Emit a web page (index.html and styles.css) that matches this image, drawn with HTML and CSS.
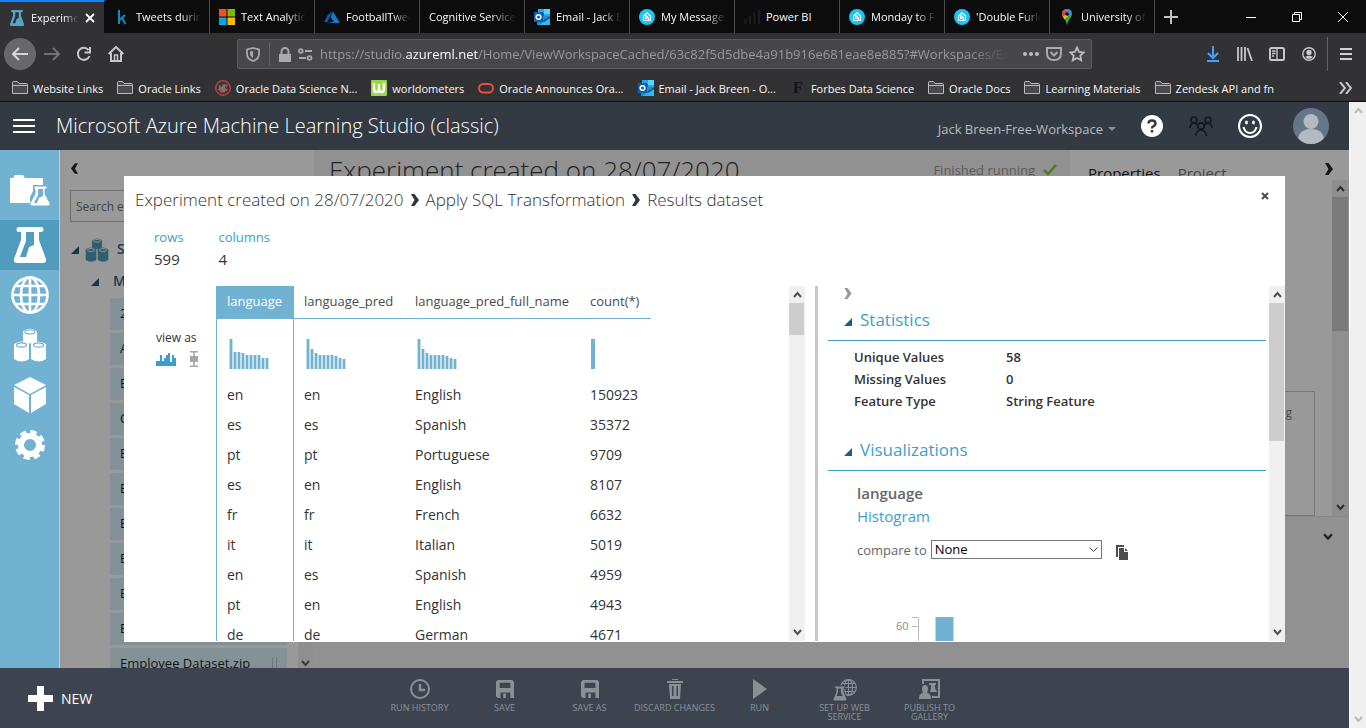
FILE: index.html
```html
<!DOCTYPE html>
<html lang="en">
<head>
<meta charset="utf-8">
<title>Experiments - Microsoft Azure Machine Learning Studio (classic)</title>
<link rel="stylesheet" href="styles.css">
</head>
<body>
<svg class="defs" aria-hidden="true">
  <symbol id="folder" viewBox="0 0 16 16"><path d="M.5 13.500V2.500q0-1 1-1h4l1.500 2h7.500q1 0 1 1v9z" fill="#4a4a4c" stroke="#b9b9ba"/><path d="M.5 5.500h15" stroke="#b9b9ba"/></symbol>
  <symbol id="outlook" viewBox="0 0 16 16"><path d="M4 0h12v8H4z" fill="#28a8ea"/><path d="M10 0h6v5h-6z" fill="#50d9ff"/><path d="M4 4h6v4H4z" fill="#0364b8"/><path d="M3 7l13 0v9H3z" fill="#1490df"/><path d="M16 7.500l-7 4.500 7 4z" fill="#123b6d"/><path d="M16 9L5 16h11z" fill="#35b8f1"/><path d="M0 3h9v10H0z" fill="#0f5fb5"/><circle cx="4.500" cy="8" r="2.300" fill="none" stroke="#fff" stroke-width="1.500"/></symbol>
  <symbol id="zen" viewBox="0 0 16 16"><circle cx="8" cy="8" r="8" fill="#19c5f5"/><path d="M4.500 11.500V7L8 3.800 11.500 7v4.500zM6.500 6l3 3v2M6.500 7.500v2h2" fill="none" stroke="#fff" stroke-width="1.200"/></symbol>
  <symbol id="flask" viewBox="0 0 32 36"><path fill-rule="evenodd" d="M5 0h22a2 2 0 0 1 0 5h-2v8l7 19q1 4-3 4H3q-4 0-3-4L7 13V5H5a2 2 0 0 1 0-5zM12 5v9L6 30h6l3-10 5-2V5z"/></symbol>
  <symbol id="globe" viewBox="0 0 38 38"><g fill="none" stroke="currentColor" stroke-width="2.600"><circle cx="19" cy="19" r="17.500"/><ellipse cx="19" cy="19" rx="9" ry="17.500"/><path d="M19 1v36M1 19h36M4 10h30M4 28h30"/></g></symbol>
  <symbol id="cylinders" viewBox="0 0 32 34"><g><path d="M9 3.500Q16-2 23 3.500V14q-7 3-14 0zM0 16q7-5 15 0v15q-7 5-15 0zM17 16q7-5 15 0v15q-7 5-15 0z"/><g fill="none" stroke="var(--ring)" stroke-width="1.200"><ellipse cx="16" cy="4" rx="5" ry="2"/><ellipse cx="7.500" cy="17" rx="5" ry="2.200"/><ellipse cx="24.500" cy="17" rx="5" ry="2.200"/></g></g></symbol>
  <symbol id="up" viewBox="0 0 9 7"><path d="M1 6l3.500-4L8 6" fill="none" stroke="currentColor" stroke-width="2"/></symbol>
  <symbol id="down" viewBox="0 0 9 7"><path d="M1 1l3.500 4L8 1" fill="none" stroke="currentColor" stroke-width="2"/></symbol>
  <symbol id="chev" viewBox="0 0 8 12"><path d="M0 0h3.500L8 6l-4.500 6H0l3.500-6z"/></symbol>
  <symbol id="tri" viewBox="0 0 8 8"><path d="M8 0v8H0z"/></symbol>
  <symbol id="floppy" viewBox="0 0 20 20"><path fill-rule="evenodd" d="M2 0h16l2 2v18h-4v-6H5v6H2l-2-2V2zM4 3v6h12V3zM8 15h3v5H8z"/></symbol>
</svg>

<header class="browser">
  <div class="tabs">
    <div class="tab active"><svg width="16" height="16" viewBox="0 0 32 36" fill="#55a5c8"><use href="#flask" width="32" height="36"/></svg><span class="label">Experiments</span><button class="close" aria-label="Close tab"><svg width="10" height="10" viewBox="0 0 10 10"><path d="M1 1l8 8M9 1L1 9" stroke="#fff" stroke-width="1.800"/></svg></button></div>
    <div class="tab"><svg width="16" height="16" viewBox="0 0 16 16"><path d="M5 1v14M11 6L5.500 11M8 9l3.500 6" fill="none" stroke="#0e8fc0" stroke-width="2"/></svg><span class="label">Tweets during</span></div>
    <div class="tab"><svg width="16" height="16" viewBox="0 0 16 16"><path d="M0 0h7.500v7.500H0z" fill="#f25022"/><path d="M8.500 0H16v7.500H8.500z" fill="#7fba00"/><path d="M0 8.500h7.500V16H0z" fill="#00a4ef"/><path d="M8.500 8.500H16V16H8.500z" fill="#ffb900"/></svg><span class="label">Text Analytics</span></div>
    <div class="tab"><svg width="16" height="16" viewBox="0 0 16 16"><path d="M8.500 2L3.800 6 0 13h3.500z" fill="#0a5ca8"/><path d="M9 2.500l7 11.500H3l7-1.200L6.500 8.500z" fill="#0f7ad0"/></svg><span class="label">FootballTweets</span></div>
    <div class="tab"><span class="label">Cognitive Services</span></div>
    <div class="tab"><svg width="16" height="16"><use href="#outlook"/></svg><span class="label">Email - Jack B</span></div>
    <div class="tab"><svg width="16" height="16"><use href="#zen"/></svg><span class="label">My Messages</span></div>
    <div class="tab"><svg width="16" height="16" viewBox="0 0 16 16"><path d="M1.500 15v-5M6 15V7M10.500 15V4M15 15V1" stroke="#1d1d1f" stroke-width="2"/></svg><span class="label whole">Power BI</span></div>
    <div class="tab"><svg width="16" height="16"><use href="#zen"/></svg><span class="label">Monday to Fri</span></div>
    <div class="tab"><svg width="16" height="16"><use href="#zen"/></svg><span class="label">'Double Furlo</span></div>
    <div class="tab"><svg width="16" height="16" viewBox="0 0 16 16"><path d="M3 5q0-5 5-5t5 5q0 2-2 4.500T8 16Q7.500 12 5 9.500T3 5z" fill="#34a853"/><path d="M3 5q0-3 2.500-4.500L8 3.500 4 8Q3 6.500 3 5z" fill="#ea4335"/><path d="M4 8l4-4 1 3-3.500 3.500z" fill="#fbbc04"/><path d="M6 .4Q11-.8 12.700 3.500L8.500 7z" fill="#4285f4"/><circle cx="8" cy="5" r="1.800" fill="#0c0c0d"/></svg><span class="label">University of</span></div>
    <button class="newtab" aria-label="New tab"><svg width="14" height="14" viewBox="0 0 14 14"><path d="M7 0v14M0 7h14" stroke="#c4c4c5" stroke-width="2"/></svg></button>
    <div class="window">
      <button aria-label="Minimise"><svg width="10" height="10" viewBox="0 0 10 10"><path d="M0 5.500h10" stroke="#fff"/></svg></button>
      <button aria-label="Restore"><svg width="10" height="10" viewBox="0 0 10 10"><path d="M.5 2.500h7v7h-7zM2.500 2V.5h7v7H8" fill="none" stroke="#fff"/></svg></button>
      <button aria-label="Close"><svg width="10" height="10" viewBox="0 0 10 10"><path d="M0 0l10 10M10 0L0 10" stroke="#fff"/></svg></button>
    </div>
  </div>

  <div class="nav">
    <button class="back" aria-label="Back"><svg width="16" height="14" viewBox="0 0 16 14"><path d="M16 7H1M7 1L1 7l6 6" fill="none" stroke="#d6d6d6" stroke-width="2"/></svg></button>
    <button class="navbtn" aria-label="Forward"><svg width="16" height="14" viewBox="0 0 16 14"><path d="M0 7h15M9 1l6 6-6 6" fill="none" stroke="#727274" stroke-width="2"/></svg></button>
    <button class="navbtn" aria-label="Reload"><svg width="16" height="16" viewBox="0 0 16 16"><path d="M12.500 4A6 6 0 1 0 13.500 10M14 1v5.500H8.500" fill="none" stroke="#c7c7c8" stroke-width="2"/></svg></button>
    <button class="navbtn" aria-label="Home"><svg width="16" height="16" viewBox="0 0 16 16"><path d="M.7 8L8 1l7.300 7M3 7v8h10V7" fill="none" stroke="#c7c7c8" stroke-width="2"/><path d="M6.500 15V9h3v6" fill="none" stroke="#c7c7c8" stroke-width="1.500"/></svg></button>
    <div class="spacer"></div>
    <div class="urlbar">
      <svg width="14" height="15" viewBox="0 0 14 15"><path d="M7 1L13 2.500V7q0 5-6 7Q1 12 1 7V2.500z" fill="none" stroke="#aaaaac" stroke-width="1.800"/><path d="M7 4v7Q4 9.500 4 7V4.500z" fill="#aaaaac"/></svg>
      <span class="rule"></span>
      <svg width="12" height="15" viewBox="0 0 12 15"><path d="M0 7h12v8H0z" fill="#aaaaac"/><path d="M2.500 8V4.500a3.500 3.500 0 0 1 7 0V8" fill="none" stroke="#aaaaac" stroke-width="2"/></svg>
      <svg width="15" height="13" viewBox="0 0 15 13"><g fill="none" stroke="#aaaaac" stroke-width="1.800"><circle cx="2.800" cy="3" r="1.900"/><path d="M7 3h7M1 10h7"/><circle cx="11.500" cy="10" r="1.900"/></g></svg>
      <span class="url">https://studio.<b>azureml.net</b>/Home/ViewWorkspaceCached/63c82f5d5dbe4a91b916e681eae8e885?#Workspaces/Experiments</span>
      <svg width="16" height="4" viewBox="0 0 16 4" fill="#bdbdbe"><circle cx="2" cy="2" r="2"/><circle cx="8" cy="2" r="2"/><circle cx="14" cy="2" r="2"/></svg>
      <svg width="16" height="14" viewBox="0 0 16 14"><path d="M1 1h14v5q0 7-7 7T1 6zM4.500 5L8 8.500 11.500 5" fill="none" stroke="#aaaaac" stroke-width="2"/></svg>
      <svg width="16" height="16" viewBox="0 0 16 16"><path d="M8 1.500l2 4.300 4.700.6-3.400 3.200.9 4.700L8 12l-4.200 2.300.9-4.700L1.300 6.400 6 5.800z" fill="none" stroke="#bdbdbe" stroke-width="1.800"/></svg>
    </div>
    <div class="spacer"></div>
    <button class="navbtn" aria-label="Downloads"><svg width="12" height="16" viewBox="0 0 12 16"><path d="M6 0v12M1 7l5 5 5-5M0 15h12" fill="none" stroke="#45a1ff" stroke-width="2"/></svg></button>
    <button class="navbtn" aria-label="Library"><svg width="16" height="14" viewBox="0 0 16 14"><path d="M1 0v14M4.500 0v14M8 0v14M10.500 1l4.500 13" stroke="#c7c7c8" stroke-width="1.800"/></svg></button>
    <button class="navbtn" aria-label="Sidebars"><svg width="16" height="14" viewBox="0 0 16 14"><rect x="1" y="1" width="14" height="12" rx="1.500" fill="none" stroke="#c7c7c8" stroke-width="2"/><path d="M8 1v12M3 4h3.500M3 6.500h3.500M3 9h2" fill="none" stroke="#c7c7c8" stroke-width="1.400"/></svg></button>
    <button class="navbtn" aria-label="Account"><svg width="14" height="14" viewBox="0 0 14 14"><circle cx="7" cy="7" r="6.200" fill="none" stroke="#c7c7c8" stroke-width="1.400"/><circle cx="7" cy="5.500" r="2.700" fill="#c7c7c8"/><path d="M3 10q4-2.500 8 0-4 4-8 0z" fill="#c7c7c8"/></svg></button>
    <span class="rule tall"></span>
    <button class="navbtn" aria-label="Menu"><svg width="12" height="12" viewBox="0 0 12 12"><path d="M0 1h12M0 6h12M0 11h12" stroke="#d0d0d0" stroke-width="2"/></svg></button>
  </div>

  <nav class="bookmarks">
    <a href="#"><svg width="16" height="16"><use href="#folder"/></svg>Website Links</a>
    <a href="#"><svg width="16" height="16"><use href="#folder"/></svg>Oracle Links</a>
    <a href="#"><svg width="16" height="16" viewBox="0 0 16 16"><circle cx="8" cy="8" r="7.300" fill="#3a3a3c" stroke="#c8443e" stroke-width="1.200"/><path d="M4 5l3 2 1-3 3 1-1 3 3 2-3 1-1 2-3-2-3-1 1-2z" fill="#77777b"/><path d="M4 10l3-1 1 3-2 1zM10 4l3 1-2 3zM10 10l2 0-1 2z" fill="#d43a35"/></svg>Oracle Data Science N...</a>
    <a href="#"><svg width="16" height="16" viewBox="0 0 16 16"><rect width="16" height="16" rx="1" fill="#9bd849"/><path d="M3 3v6q0 3 2.500 3T8 9V4v5q0 3 2.500 3T13 9V3" fill="none" stroke="#fff" stroke-width="2.400"/></svg>worldometers</a>
    <a href="#"><svg width="16" height="16" viewBox="0 0 16 16"><rect x="1" y="4" width="14" height="8.500" rx="4.200" fill="none" stroke="#e2543e" stroke-width="2"/></svg>Oracle Announces Ora...</a>
    <a href="#"><svg width="16" height="16"><use href="#outlook"/></svg>Email - Jack Breen - O...</a>
    <a href="#"><span class="forbes">F</span>Forbes Data Science</a>
    <a href="#"><svg width="16" height="16"><use href="#folder"/></svg>Oracle Docs</a>
    <a href="#"><svg width="16" height="16"><use href="#folder"/></svg>Learning Materials</a>
    <a href="#"><svg width="16" height="16"><use href="#folder"/></svg>Zendesk API and fn</a>
    <button class="more" aria-label="More bookmarks"><svg width="13" height="12" viewBox="0 0 13 12"><path d="M1 0l5 6-5 6M7 0l5 6-5 6" fill="none" stroke="#c7c7c8" stroke-width="2"/></svg></button>
  </nav>
</header>

<div class="page">
<div class="app">
  <header class="appbar">
    <button class="burger" aria-label="Menu"><svg width="22" height="14" viewBox="0 0 22 14"><path d="M0 1h22M0 7h22M0 13h22" stroke="#fff" stroke-width="2"/></svg></button>
    <h1>Microsoft Azure Machine Learning Studio (classic)</h1>
    <button class="workspace">Jack Breen-Free-Workspace<svg width="8" height="4" viewBox="0 0 8 4"><path d="M0 0h8L4 4z" fill="#8e9297"/></svg></button>
    <button class="round" aria-label="Help"><svg width="22" height="22" viewBox="0 0 22 22"><circle cx="11" cy="11" r="11" fill="#fff"/><path d="M7.500 8.500Q7.500 5.500 11 5.500t3.500 3q0 1.500-1.800 2.500T11 13.500M11 15v2.500" fill="none" stroke="#333a43" stroke-width="2.500"/></svg></button>
    <button class="round" aria-label="Community"><svg width="24" height="20" viewBox="0 0 24 20"><g fill="none" stroke="#15181c" stroke-width="1.700"><circle cx="5" cy="4" r="3"/><circle cx="19" cy="4" r="3"/><circle cx="12" cy="10" r="3.200"/><path d="M1 12q0-4 4-5 2 0 4 3M23 12q0-4-4-5-2 0-4 3M6.500 20q1-6 5.500-6t5.500 6"/></g></svg></button>
    <button class="round" aria-label="Feedback"><svg width="24" height="24" viewBox="0 0 24 24"><g fill="none" stroke="#fff" stroke-width="2"><circle cx="12" cy="12" r="11"/><path d="M5.500 13q1.500 6 6.500 6t6.500-6"/></g><ellipse cx="8.500" cy="8.500" rx="1.400" ry="2" fill="#fff"/><ellipse cx="15.500" cy="8.500" rx="1.400" ry="2" fill="#fff"/></svg></button>
    <button class="avatar" aria-label="Profile"><svg width="36" height="36" viewBox="0 0 36 36"><circle cx="18" cy="18" r="18" fill="#66768a"/><circle cx="18" cy="13.500" r="7.500" fill="#b4bac0"/><path d="M5 30q2-9 13-9t13 9q-5 6-13 6T5 30z" fill="#b4bac0"/></svg></button>
  </header>

  <div class="workspace-area">
    <nav class="rail">
      <a href="#" aria-label="Projects"><svg width="40" height="32" viewBox="0 0 40 32" fill="#fff"><path d="M0 3h3l2-3h8l2 3h18v7H23v6l-3 6v6H0z"/><g transform="translate(21 11)"><path d="M3 0h13v3h-2v5l5 9q1 3-2 3H1q-3 0-2-3l5-9V3H3z" stroke="#71b1d1" stroke-width="1"/><path d="M7 3v6l-4 8h3l2-5 4-2V3z" fill="#71b1d1"/></g></svg></a>
      <a href="#" class="current" aria-label="Experiments"><svg width="32" height="36" fill="#fff"><use href="#flask"/></svg></a>
      <a href="#" aria-label="Web services"><svg width="38" height="38" color="#fff"><use href="#globe"/></svg></a>
      <a href="#" aria-label="Datasets"><svg class="c1" width="32" height="34" fill="#fff"><use href="#cylinders"/></svg></a>
      <a href="#" aria-label="Trained models"><svg width="32" height="36" viewBox="0 0 32 36" fill="#fff"><path d="M16 0l16 8-16 9L0 8zM0 10l15 8v18L0 27zM32 10l-15 8v18l15-9z"/></svg></a>
      <a href="#" aria-label="Settings"><svg width="30" height="30" viewBox="0 0 30 30"><circle cx="15" cy="15" r="9" fill="none" stroke="#fff" stroke-width="6"/><circle cx="15" cy="15" r="13" fill="none" stroke="#fff" stroke-width="4" stroke-dasharray="6.200 4.010"/></svg></a>
    </nav>

    <aside class="palette">
      <button class="collapse" aria-label="Collapse"><svg class="flip" width="7" height="11" fill="#15181b"><use href="#chev"/></svg></button>
      <input class="search" type="text" aria-label="Search experiment items" placeholder="Search experiment items">
      <div class="tree">
        <svg width="8" height="8" fill="#12394c"><use href="#tri"/></svg>
        <svg class="c2" width="24" height="24" fill="#2f5d72"><use href="#cylinders"/></svg>
        <span>S</span>
      </div>
      <div class="tree sub"><svg width="8" height="8" fill="#12394c"><use href="#tri"/></svg><span>M</span></div>
      <ul class="items">
        <li>2</li><li>A</li><li>E</li><li>C</li><li>E</li><li>E</li><li>E</li><li>E</li><li>E</li><li>E</li>
        <li>Employee Dataset.zip<i></i></li>
      </ul>
      <div class="panel-scroll"><svg width="9" height="7" color="#3b3b3b"><use href="#down"/></svg></div>
    </aside>

    <main class="canvas">
      <h2>Experiment created on 28/07/2020</h2>
      <span class="status">Finished running<svg width="14" height="12" viewBox="0 0 14 12"><path d="M1 6l4 4 8-9" fill="none" stroke="#4f7c1d" stroke-width="2.500"/></svg></span>
    </main>

    <aside class="props">
      <div class="props-main">
        <div class="props-tabs"><b>Properties</b><span>Project</span><svg width="8" height="12" fill="#15181b"><use href="#chev"/></svg></div>
        <div class="props-body">
          <div class="summary"><span>g</span></div>
          <div class="scrollbar dim"><svg width="9" height="7"><use href="#up"/></svg><div class="thumb"></div><svg width="9" height="7"><use href="#down"/></svg></div>
        </div>
      </div>
      <div class="quick"><svg width="10" height="8" color="#1c1f22"><use href="#down"/></svg></div>
    </aside>
  </div>

  <footer class="commands">
    <button class="new"><svg width="25" height="25" viewBox="0 0 25 25"><path d="M9 0h7v9h9v7h-9v9H9v-9H0V9h9z" fill="#fff"/></svg>NEW</button>
    <div class="actions">
      <button><svg width="20" height="20" viewBox="0 0 20 20"><path d="M10 5v6h5" fill="none" stroke="currentColor" stroke-width="2.500"/><circle cx="10" cy="10" r="9" fill="none" stroke="currentColor" stroke-width="2"/></svg>RUN HISTORY</button>
      <button><svg width="18" height="20"><use href="#floppy"/></svg>SAVE</button>
      <button><svg width="18" height="20"><use href="#floppy"/></svg>SAVE AS</button>
      <button><svg width="16" height="20" viewBox="0 0 16 20"><path fill-rule="evenodd" d="M5 0h6v1H5zM0 2h16v2H0zM2 5h12l-1 15H3zM5 7v10h1.500V7zM9.500 7v10H11V7z"/></svg>DISCARD CHANGES</button>
      <button><svg width="14" height="20" viewBox="0 0 14 20"><path d="M0 0l14 10L0 20z"/></svg>RUN</button>
      <button><svg width="24" height="22" viewBox="0 0 24 22"><use href="#globe" x="7" y="0" width="17" height="17"/><path d="M1 7h11v2h-1v4l3 7q0 2-2 2H1q-2 0-1-2l3-7V9H1z" stroke="#3d444f"/><path d="M5 9.500h3V14l2 3H3.500L5 13z" fill="#3d444f"/></svg>SET UP WEB SERVICE</button>
      <button><svg width="22" height="20" viewBox="0 0 22 20"><path d="M3 0h18v19h-8v-2h6V2H5v3H3zM10 4h7v2h-1v3l2 4h-7l1-4V6h-2z"/><path d="M6 6q3 0 3 4 0 2-1 3.500l3 2q1 1 1 4.500H0q0-3.500 1-4.500l3-2Q3 12 3 10q0-4 3-4z"/></svg>PUBLISH TO GALLERY</button>
    </div>
  </footer>

  <section class="modal" role="dialog" aria-label="Results dataset">
    <div class="crumbs">
      <span>Experiment created on 28/07/2020</span><svg width="8" height="12" fill="#2d3740"><use href="#chev"/></svg>
      <span>Apply SQL Transformation</span><svg width="8" height="12" fill="#2d3740"><use href="#chev"/></svg>
      <span>Results dataset</span>
      <button aria-label="Close"><svg width="8" height="8" viewBox="0 0 8 8"><path d="M1 1l6 6M7 1L1 7" stroke="#4a4a4a" stroke-width="2"/></svg></button>
    </div>
    <dl class="counts">
      <div><dt>rows</dt><dd>599</dd></div>
      <div><dt>columns</dt><dd>4</dd></div>
    </dl>
    <div class="split">
      <div class="view-as">
        <span>view as</span>
        <svg width="20" height="13" viewBox="0 0 20 13"><path d="M0 13V8h4V2h2v6h2V5h2V2h2V0h2v9h2V2h2v3h2v8z" fill="#3c9fcb"/></svg>
        <svg width="8" height="16" viewBox="0 0 8 16"><path d="M0 0h8v1.500H4.800V5H8v6H4.800v3.500H8V16H0v-1.500h3.200V11H0V5h3.200V1.500H0z" fill="#a5a6a8"/></svg>
      </div>
      <div class="grid">
        <table>
          <colgroup><col class="w1"><col class="w2"><col class="w3"><col class="w4"></colgroup>
          <thead><tr><th>language</th><th>language_pred</th><th>language_pred_full_name</th><th>count(*)</th></tr></thead>
          <tbody>
            <tr class="spark">
              <td><svg width="40" height="30"><path d="M2 30V0M6 30V13M10 30V13M14 30V14M18 30V16M22 30V16M26 30V16M30 30V16M34 30V19M38 30V19" stroke="#c6e0ec" stroke-width="4"/><path d="M2 30V0M6 30V13M10 30V13M14 30V14M18 30V16M22 30V16M26 30V16M30 30V16M34 30V19M38 30V19" stroke="#71b1d1" stroke-width="2"/></svg></td>
              <td><svg width="40" height="30"><path d="M2 30V0M6 30V10M10 30V14M14 30V16M18 30V16M22 30V16M26 30V16M30 30V17M34 30V19M38 30V20" stroke="#c6e0ec" stroke-width="4"/><path d="M2 30V0M6 30V10M10 30V14M14 30V16M18 30V16M22 30V16M26 30V16M30 30V17M34 30V19M38 30V20" stroke="#71b1d1" stroke-width="2"/></svg></td>
              <td><svg width="40" height="30"><path d="M2 30V0M6 30V10M10 30V14M14 30V16M18 30V16M22 30V16M26 30V16M30 30V17M34 30V19M38 30V20" stroke="#c6e0ec" stroke-width="4"/><path d="M2 30V0M6 30V10M10 30V14M14 30V16M18 30V16M22 30V16M26 30V16M30 30V17M34 30V19M38 30V20" stroke="#71b1d1" stroke-width="2"/></svg></td>
              <td><svg width="40" height="30"><path d="M2 30V0" stroke="#71b1d1" stroke-width="4"/></svg></td>
            </tr>
            <tr><td>en</td><td>en</td><td>English</td><td>150923</td></tr>
            <tr><td>es</td><td>es</td><td>Spanish</td><td>35372</td></tr>
            <tr><td>pt</td><td>pt</td><td>Portuguese</td><td>9709</td></tr>
            <tr><td>es</td><td>en</td><td>English</td><td>8107</td></tr>
            <tr><td>fr</td><td>fr</td><td>French</td><td>6632</td></tr>
            <tr><td>it</td><td>it</td><td>Italian</td><td>5019</td></tr>
            <tr><td>en</td><td>es</td><td>Spanish</td><td>4959</td></tr>
            <tr><td>pt</td><td>en</td><td>English</td><td>4943</td></tr>
            <tr><td>de</td><td>de</td><td>German</td><td>4671</td></tr>
          </tbody>
        </table>
      </div>
      <div class="scrollbar"><svg width="9" height="7"><use href="#up"/></svg><div class="thumb short"></div><svg width="9" height="7"><use href="#down"/></svg></div>
      <div class="details">
        <div class="detail-body">
          <button class="fold" aria-label="Collapse pane"><svg width="8" height="11" fill="#9a9a9a"><use href="#chev"/></svg></button>
          <h3><svg width="8" height="8" fill="#1c5f80"><use href="#tri"/></svg>Statistics</h3>
          <dl class="stats">
            <dt>Unique Values</dt><dd>58</dd>
            <dt>Missing Values</dt><dd>0</dd>
            <dt>Feature Type</dt><dd>String Feature</dd>
          </dl>
          <h3><svg width="8" height="8" fill="#1c5f80"><use href="#tri"/></svg>Visualizations</h3>
          <div class="viz">
            <h4>language</h4>
            <h5>Histogram</h5>
            <div class="compare">
              <label for="cmp">compare to</label>
              <span class="select"><select id="cmp"><option>None</option></select><svg width="9" height="6" viewBox="0 0 9 6"><path d="M.5.5l4 4 4-4" fill="none" stroke="#444"/></svg></span>
              <button aria-label="Copy"><svg width="12" height="15" viewBox="0 0 12 15"><path d="M0 0h8v2H2v10H0z" fill="#4c4c4c"/><path d="M3 3h5v4h4v8H3zM9 3l3 3H9z" fill="#4c4c4c"/></svg></button>
            </div>
            <div class="chart"><span>60</span><svg width="50" height="40" viewBox="0 0 50 40"><path d="M0 .5h6.500V40M0 9.500h6" fill="none" stroke="#bdbdbd"/><path d="M23 0h19v40H23z" fill="#b9d9e8"/><path d="M24 0h17v40H24z" fill="#71b1d1"/></svg></div>
          </div>
        </div>
        <div class="scrollbar"><svg width="9" height="7"><use href="#up"/></svg><div class="thumb"></div><svg width="9" height="7"><use href="#down"/></svg></div>
      </div>
    </div>
  </section>
</div>
<div class="scrollbar outer"><svg width="9" height="7"><use href="#up"/></svg><svg width="9" height="7"><use href="#down"/></svg></div>
</div>
</body>
</html>
```
FILE: styles.css
```css
* { box-sizing: border-box; }
body { margin: 0; height: 100vh; display: flex; flex-direction: column; overflow: hidden; font-family: "Open Sans", "Noto Sans", sans-serif; font-size: 12px; color: #333; background: #fff; }
button { border: 0; padding: 0; margin: 0; background: none; font: inherit; color: inherit; display: flex; align-items: center; justify-content: center; }
svg { flex: none; display: block; }
h1, h2, h3, h4, h5, dl, dd, ul { margin: 0; padding: 0; font-weight: 400; }
.defs { position: absolute; width: 0; height: 0; }

/* browser chrome */
.browser { flex: none; background: #323234; color: #f9f9fa; border-bottom: 1px solid #0c0c0d; }
.tabs { display: flex; height: 33px; background: #0c0c0d; font-size: 11px; }
.tab { width: 105px; flex: 0 1 105px; display: flex; align-items: center; gap: 6px; padding: 0 8px 0 9px; border-right: 1px solid #4c4c4e; }
.tab.active { background: #323234; border-top: 2px solid #0a84ff; border-right-color: #0c0c0d; }
.label { flex: 1; min-width: 0; overflow: hidden; white-space: nowrap; -webkit-mask-image: linear-gradient(90deg, #000 70%, transparent); mask-image: linear-gradient(90deg, #000 70%, transparent); }
.label.whole { -webkit-mask-image: none; mask-image: none; }
.close { width: 12px; height: 16px; }
.newtab { width: 32px; }
.window { margin-left: auto; display: flex; }
.window button { width: 46px; }

.nav { display: flex; align-items: center; height: 42px; padding: 0 4px; }
.back { width: 32px; height: 32px; border-radius: 16px; background: #68686a; }
.navbtn { width: 32px; height: 32px; }
.spacer { flex: 1 1 0; }
.urlbar { flex: 8 1 0; min-width: 0; height: 30px; display: flex; align-items: center; gap: 7px; padding: 0 6px 0 8px; background: #474749; border: 1px solid #5c5c5e; border-radius: 2px; }
.rule { width: 1px; height: 22px; background: #626266; margin: 0 2px; }
.rule.tall { height: 34px; }
.url { flex: 1; min-width: 0; margin-right: 8px; overflow: hidden; white-space: nowrap; font-size: 13px; color: #98989a; -webkit-mask-image: linear-gradient(90deg, #000 94%, transparent); mask-image: linear-gradient(90deg, #000 94%, transparent); }
.url b { font-weight: 400; color: #f9f9fa; }

.bookmarks { display: flex; align-items: center; gap: 14px; height: 26px; padding: 0 14px 0 12px; font-size: 11px; }
.bookmarks a { display: flex; align-items: center; gap: 5px; color: #f9f9fa; text-decoration: none; white-space: nowrap; }
.forbes { width: 16px; text-align: center; font: 700 16px "Liberation Serif", serif; color: #151515; }
.more { margin-left: auto; }

/* application */
.page { flex: 1; min-height: 0; display: flex; }
.app { flex: 1; min-width: 0; position: relative; display: flex; flex-direction: column; }
.appbar { flex: none; height: 48px; display: flex; align-items: center; padding: 0 20px 0 13px; background: #333a43; color: #fff; }
.appbar h1 { margin-left: 21px; padding-bottom: 2px; flex: 1; font-size: 20px; font-weight: 300; white-space: nowrap; }
.workspace { gap: 5px; color: #b9bcc0; font-size: 13px; padding-top: 6px; margin-right: 11px; }
.round { width: 49px; }
.avatar { margin-left: 19px; }
.workspace-area { flex: 1; min-height: 0; display: flex; }

.rail { flex: none; width: 60px; padding-top: 20px; background: #71b1d1; border-right: 1px solid #b5cdd9; overflow: hidden; }
.rail a { display: flex; height: 50px; align-items: center; justify-content: center; }
.rail a:first-child { align-items: start; padding-top: 5px; }
.rail .current { background: #509cbf; }
.c1 { --ring: #71b1d1; }
.c2 { --ring: #999; }

.palette { flex: none; width: 254px; position: relative; background: #999; overflow: hidden; color: #111; }
.collapse { margin: 13px 0 0 11px; }
.flip { transform: scaleX(-1); }
.search { display: block; width: 216px; height: 32px; margin: 16px 0 0 10px; padding: 0 5px; border: 1px solid #6f6f6f; background: none; font: inherit; }
.search::placeholder { color: #444; opacity: 1; }
.tree { display: flex; align-items: center; gap: 6px; height: 24px; margin: 16px 0 0 11px; font-size: 14px; font-weight: 600; color: #143c50; }
.tree span { margin-left: 2px; line-height: 20px; padding-bottom: 3px; }
.tree.sub { margin: 8px 0 0 31px; gap: 12px; }
.items { list-style: none; margin: 4px 0 0 50px; width: 177px; }
.items li { height: 32px; margin-bottom: 3px; padding: 0 10px 2px; line-height: 30px; background: #849196; font-size: 13px; display: flex; justify-content: space-between; align-items: center; white-space: nowrap; }
.items i { width: 5px; height: 12px; border: solid #6b7477; border-width: 0 1px; }
.panel-scroll { position: absolute; right: 0; bottom: 0; width: 16px; height: 26px; background: #8f8f8f; display: flex; align-items: end; justify-content: center; padding: 0 2px 1px 0; }

.canvas { flex: 1; min-width: 0; display: flex; justify-content: space-between; align-items: start; background: #919191; padding: 2px 13px 0 15px; }
.canvas h2 { font-size: 26px; line-height: 36px; font-weight: 300; color: #222; white-space: nowrap; }
.status { display: flex; gap: 8px; align-items: center; font-size: 13px; line-height: 36px; color: #5c5c5c; white-space: nowrap; }

.props { flex: none; width: 279px; display: flex; flex-direction: column; background: #919191; }
.props-main { height: 367px; display: flex; flex-direction: column; background: #999; border-bottom: 1px solid #888; }
.props-tabs { height: 30px; flex: none; display: flex; align-items: start; gap: 17px; padding: 12px 16px 0 18px; font-size: 15px; line-height: 22px; color: #454545; }
.props-tabs b { font-weight: 400; color: #111; }
.props-tabs svg { margin: 1px 0 0 auto; }
.props-body { flex: 1; min-height: 0; display: flex; align-items: end; }
.summary { flex: 1; height: 125px; margin: 0 17px 0 18px; padding: 12px 22px; border: 1px solid #777; text-align: right; color: #4c4c4c; }
.quick { display: flex; justify-content: end; padding: 16px 16px 0 0; }

/* scrollbars */
.scrollbar { flex: none; width: 16px; align-self: stretch; display: flex; flex-direction: column; align-items: center; padding: 5px 0; background: #f0f0f0; color: #505050; }
.scrollbar .thumb { width: 100%; height: 138px; margin: 5px 0 auto; border-right: 1px solid #f0f0f0; background: #cdcdcd; }
.scrollbar .thumb.short { height: 32px; }
.scrollbar.dim { width: 17px; background: #8f8f8f; color: #303030; }
.scrollbar.dim .thumb { height: 134px; background: #7a7a7a; border-color: #8f8f8f; }
.scrollbar.outer { width: 17px; justify-content: space-between; color: #bababa; border-left: 1px solid #fff; }

/* command bar */
.commands { flex: none; height: 60px; display: grid; grid-template-columns: 1fr auto 1fr; background: #3d444f; }
.new { justify-self: start; align-self: center; padding-left: 28px; gap: 8px; color: #fff; font-size: 14px; }
.actions { display: flex; color: #8b9097; }
.actions button { width: 85px; flex-direction: column; justify-content: start; gap: 4px; padding: 11px 10px 0; font-size: 9px; line-height: 9px; white-space: nowrap; fill: currentColor; }
.actions button:nth-child(n+6) { white-space: normal; padding-left: 14px; padding-right: 14px; }
.actions button:nth-child(6) { gap: 2px; }

/* results dialog */
.modal { position: absolute; left: 124px; right: 64px; top: 74px; bottom: 86px; display: flex; flex-direction: column; background: #fff; padding-bottom: 1px; }
.crumbs { flex: none; display: flex; align-items: center; gap: 7px; height: 48px; padding: 0 16px 0 11px; font-size: 17px; line-height: 24px; font-weight: 300; color: #333; white-space: nowrap; }
.crumbs button { margin: 0 0 8px auto; }
.counts { flex: none; display: flex; gap: 35px; height: 62px; padding: 3px 30px 0; font-size: 13px; }
.counts dt { color: #3c9fcb; line-height: 20px; }
.counts dd { font-size: 15px; line-height: 24px; }
.split { flex: 1; min-height: 0; display: flex; }
.view-as { flex: none; width: 92px; padding: 43px 18px 0 32px; display: flex; flex-wrap: wrap; align-content: start; justify-content: space-between; align-items: center; row-gap: 5px; white-space: nowrap; line-height: 17px; font-size: 12px; }
.grid { flex: 1; min-width: 0; overflow: hidden; }
table { border-collapse: separate; border-spacing: 0; table-layout: fixed; width: 435px; }
.w1 { width: 78px; } .w2 { width: 111px; } .w3 { width: 175px; } .w4 { width: 71px; }
th { height: 33px; padding: 0 10px 2px; text-align: left; font-weight: 400; font-size: 13px; color: #4a4a4a; border-bottom: 1px solid #71b1d1; white-space: nowrap; }
th:first-child { background: #71b1d1; color: #fff; border-left: 1px solid #71b1d1; }
td { height: 30px; padding: 0 10px; font-size: 14px; line-height: 20px; white-space: nowrap; }
td:first-child { border: solid #71b1d1; border-width: 0 1px; }
.spark td { height: 61px; padding: 0 12px 0; vertical-align: middle; }
.spark td:last-child { padding-left: 11px; }
.spark svg { margin-top: 9px; }
.details { flex: none; width: 470px; margin-left: 10px; border-left: 3px solid #c6c6c6; display: flex; }
.detail-body { flex: 1; min-width: 0; overflow: hidden; padding: 0 3px 0 10px; }
.fold { padding: 2px 0 0 16px; }
h3 { display: flex; align-items: center; gap: 8px; height: 42px; padding-left: 16px; border-bottom: 1px solid #3c9fcb; color: #3c9fcb; font-size: 17px; }
h3 svg { margin-top: 4px; }
.stats { display: grid; grid-template-columns: 152px 1fr; padding: 5px 26px 0; height: 88px; align-content: start; line-height: 22px; font-weight: 600; font-size: 13px; }
.stats dd { font-weight: 600; }
.viz { padding: 11px 29px 0; }
h4 { font-size: 15px; line-height: 23px; font-weight: 600; color: #666; }
h5 { font-size: 15px; line-height: 23px; color: #3c9fcb; }
.compare { display: flex; align-items: center; gap: 4px; height: 43px; color: #666; font-size: 13px; }
.compare button { margin: 6px 0 0 10px; }
.select { position: relative; width: 171px; }
.select select { display: block; width: 100%; height: 19px; padding: 0 3px; border: 1px solid #767676; border-radius: 0; background: #fff; appearance: none; font: inherit; line-height: 17px; color: #000; }
.select svg { position: absolute; right: 4px; top: 7px; }
.chart { display: flex; gap: 3px; margin-top: 46px; padding-left: 39px; color: #888; font-size: 11px; line-height: 18px; }
```
